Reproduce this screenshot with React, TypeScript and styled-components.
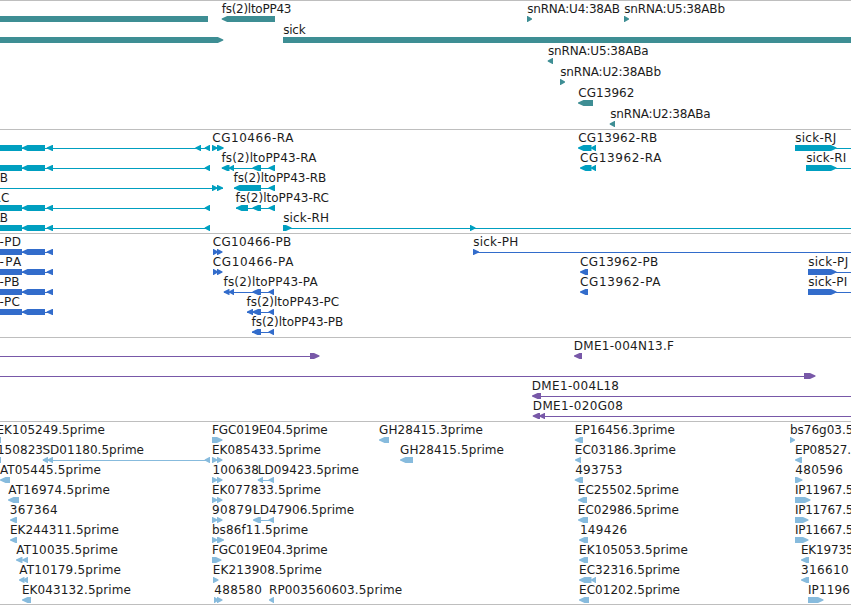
import React from 'react';
import styled, { createGlobalStyle } from 'styled-components';

type Dir = 'l' | 'r' | 'n';
/** text, left ink edge, right ink edge */
type Label = [string, number, number];
/** start, end, strand */
type Exon = [number, number, Dir];
/** start, end */
type Intron = [number, number];

interface LaneData {
  labels?: Label[];
  exons?: Exon[];
  introns?: Intron[];
}

interface TrackData {
  name: string;
  color: string;
  laneHeight: number;
  tail: number;
  lanes: LaneData[];
}

const WIDTH = 851;
const BAR_TOP = 13;
const BAR_HEIGHT = 6;
const HEAD = 5.5;

const GlobalStyle = createGlobalStyle`
  body {
    margin: 0;
    background: #ffffff;
    overflow: hidden;
  }
`;

const Viewer = styled.main`
  display: flex;
  flex-direction: column;
  width: ${WIDTH}px;
  height: 605px;
  overflow: hidden;
  box-sizing: border-box;
  border-bottom: 1px solid #bebebe;
  background: #ffffff;
`;

const TrackPanel = styled.section<{ $tail: number }>`
  display: flex;
  flex-direction: column;
  flex: none;
  border-top: 1px solid #bebebe;
  padding-top: 2px;
  padding-bottom: ${(p) => p.$tail}px;
`;

const LaneChart = styled.svg<{ $height: number; $color: string }>`
  display: block;
  width: ${WIDTH}px;
  height: ${(p) => p.$height}px;
  overflow: visible;
  fill: ${(p) => p.$color};
`;

const FeatureLabel = styled.text`
  font-family: 'DejaVu Sans', sans-serif;
  font-size: 12px;
  fill: #1c1c1c;
  white-space: pre;
`;

const leftGene: Exon[] = [[0, 22, 'n'], [22, 45, 'l'], [46.7, 53, 'l']];
const pair: Exon[] = [[212, 217.5, 'r'], [217, 222.5, 'r']];

const tracks: TrackData[] = [
  {
    name: 'Genes',
    color: '#3e8e94',
    laneHeight: 21,
    tail: 0,
    lanes: [
      {
        labels: [['fs(2)ltoPP43', 222.2, 290.7], ['snRNA:U4:38AB', 527.7, 619.3], ['snRNA:U5:38ABb', 624.7, 724.3]],
        exons: [[0, 208, 'n'], [221.7, 275, 'l'], [527, 532, 'r'], [624, 629, 'r']],
      },
      { labels: [['sick', 283.7, 305]], exons: [[0, 223.3, 'r'], [283, 851, 'n']] },
      { labels: [['snRNA:U5:38ABa', 548.5, 648]], exons: [[547.7, 553, 'l']] },
      { labels: [['snRNA:U2:38ABb', 560.7, 660.3]], exons: [[560, 565, 'r']] },
      { labels: [['CG13962', 578.9, 633.7]], exons: [[578, 593, 'l']] },
      { labels: [['snRNA:U2:38ABa', 610.7, 710]], exons: [[609.7, 615, 'l']] },
    ],
  },
  {
    name: 'Transcripts',
    color: '#009fc0',
    laneHeight: 20,
    tail: 1,
    lanes: [
      {
        labels: [['CG10466-RA', 212.9, 292.7], ['CG13962-RB', 578.9, 656.5], ['sick-RJ', 795.7, 835.5]],
        introns: [[22, 210], [212, 223], [836, 851]],
        exons: [...leftGene, [195.3, 201, 'l'], [204.7, 210, 'l'], [212, 217.5, 'r'], [217, 223.7, 'r'], [578, 591.5, 'l'], [591, 596, 'l'], [795, 836.5, 'r']],
      },
      {
        labels: [['fs(2)ltoPP43-RA', 222, 315.7], ['CG13962-RA', 580.7, 660.8], ['sick-RI', 806.7, 845.5]],
        introns: [[22, 210], [222, 275], [836, 851]],
        exons: [...leftGene, [204.7, 210, 'l'], [221.7, 229.5, 'l'], [229, 234, 'l'], [252.5, 261, 'l'], [268.5, 275, 'l'], [580, 591.5, 'l'], [591, 596, 'l'], [806, 836.5, 'r']],
      },
      {
        labels: [['B', 0.8, 6.3], ['fs(2)ltoPP43-RB', 234, 325.5]],
        introns: [[0, 223], [234, 275]],
        exons: [[212, 217.5, 'r'], [217, 223, 'r'], [234, 261, 'l'], [268.5, 275, 'l']],
      },
      {
        labels: [['RC', -6.3, 8.7], ['fs(2)ltoPP43-RC', 236, 328.3]],
        introns: [[22, 210], [236, 275]],
        exons: [...leftGene, [204.7, 210, 'l'], [236, 248, 'l'], [252.5, 261, 'l'], [268.5, 275, 'l']],
      },
      {
        labels: [['RB', -6.3, 7.2], ['sick-RH', 283.7, 328.3]],
        introns: [[22, 210], [283, 851]],
        exons: [...leftGene, [204.7, 210, 'l'], [283, 291.5, 'r'], [470, 475.5, 'r']],
      },
    ],
  },
  {
    name: 'Coding sequences',
    color: '#326ccb',
    laneHeight: 20,
    tail: 1,
    lanes: [
      {
        labels: [['-PD', 0, 20.3], ['CG10466-PB', 213.5, 290.5], ['sick-PH', 473.7, 517.5]],
        introns: [[22, 53], [473, 851]],
        exons: [...leftGene, [213, 218, 'r'], [217, 222.5, 'r'], [473, 479, 'r']],
      },
      {
        labels: [['-PA', 0, 20.5], ['CG10466-PA', 213.5, 292.7], ['CG13962-PB', 580.7, 657.5], ['sick-PJ', 808.7, 847.5]],
        introns: [[22, 53], [836, 851]],
        exons: [...leftGene, [213, 218, 'r'], [217, 222.5, 'r'], [580, 588, 'l'], [808, 836.5, 'r']],
      },
      {
        labels: [['-PB', 0, 18.7], ['fs(2)ltoPP43-PA', 224, 317], ['CG13962-PA', 580.7, 659.8], ['sick-PI', 808.7, 846.5]],
        introns: [[22, 53], [224, 274], [836, 851]],
        exons: [...leftGene, [223.7, 229.5, 'l'], [229, 234, 'l'], [252.5, 261, 'l'], [268.5, 274, 'l'], [580, 588, 'l'], [808, 836.5, 'r']],
      },
      {
        labels: [['-PC', 0, 19.3], ['fs(2)ltoPP43-PC', 247, 338.5]],
        introns: [[22, 53], [247, 274]],
        exons: [...leftGene, [247, 253, 'l'], [252.5, 261, 'l'], [268.5, 274, 'l']],
      },
      {
        labels: [['fs(2)ltoPP43-PB', 252, 342.5]],
        introns: [[252, 274]],
        exons: [[252, 261, 'l'], [268.5, 274, 'l']],
      },
    ],
  },
  {
    name: 'Clones',
    color: '#7858a8',
    laneHeight: 20,
    tail: 1,
    lanes: [
      {
        labels: [['DME1-004N13.F', 574.9, 673.3]],
        introns: [[0, 312]],
        exons: [[310, 319.5, 'r'], [574, 582, 'l']],
      },
      { introns: [[0, 806]], exons: [[804, 815.5, 'r']] },
      { labels: [['DME1-004L18', 532.9, 618.3]], introns: [[534, 851]], exons: [[532, 541, 'l']] },
      { labels: [['DME1-020G08', 533.9, 622.3]], introns: [[534, 851]], exons: [[532.7, 540, 'l'], [539, 545, 'l']] },
    ],
  },
  {
    name: 'ESTs',
    color: '#87bbdd',
    laneHeight: 20,
    tail: 0,
    lanes: [
      {
        labels: [['EK105249.5prime', -2.5, 104.3], ['FGC019E04.5prime', 213, 327], ['GH28415.3prime', 379.7, 482.3], ['EP16456.3prime', 575.9, 674.3], ['bs76g03.5', 791, 852.7]],
        exons: [[0, 1, 'n'], [212, 222.5, 'r'], [379, 389, 'l'], [574.7, 583, 'l'], [790, 795, 'r']],
      },
      {
        labels: [['150823', -2, 42.3], ['SD01180.5prime', 43.2, 143.3], ['EK085433.5prime', 213, 320.3], ['GH28415.5prime', 400.7, 503.3], ['EC03186.3prime', 575.9, 675.3], ['EP08527.', 796, 850.5]],
        introns: [[43, 210]],
        exons: [[0, 1, 'n'], [42.7, 48, 'l'], [47.5, 53, 'l'], [204.7, 210, 'l'], ...pair, [400, 413, 'l'], [575, 581, 'l'], [795, 802, 'l']],
      },
      {
        labels: [['AT05445.5prime', 0, 100.3], ['100638', 213.7, 258.3], ['LD09423.5prime', 258.9, 358.3], ['493753', 575.9, 621.7], ['480596', 796, 842.3]],
        introns: [[258, 274]],
        exons: [[0, 10, 'l'], ...pair, [257.7, 263, 'l'], [268.5, 274, 'l'], [574.7, 583, 'l'], [795, 802.5, 'r']],
      },
      {
        labels: [['AT16974.5prime', 8.3, 109.3], ['EK077833.5prime', 213, 320.3], ['EC25502.5prime', 578.9, 678.3], ['IP11967.5', 796, 852.7]],
        exons: [[8, 19, 'l'], ...pair, [578, 587, 'l'], [795, 810.5, 'r']],
      },
      {
        labels: [['367364', 10.9, 57], ['90879', 213, 251.5], ['LD47906.5prime', 254, 353.5], ['EC02986.5prime', 578.9, 678.3], ['IP11767.5', 796, 852.7]],
        introns: [[254, 274]],
        exons: [[10, 17, 'l'], ...pair, [253, 261, 'l'], [268.5, 274, 'l'], [578, 588, 'l'], [795, 808.5, 'r']],
      },
      {
        labels: [['EK244311.5prime', 11, 118.3], ['bs86f11.5prime', 213, 307.5], ['149426', 581, 626.5], ['IP11667.5', 796, 852.7]],
        exons: [[10, 17, 'l'], [212, 217.5, 'r'], [217, 224, 'r'], [579, 588, 'l'], [795, 808.5, 'r']],
      },
      {
        labels: [['AT10035.5prime', 16.3, 117.3], ['FGC019E04.3prime', 213, 327], ['EK105053.5prime', 580.2, 687.3], ['EK19735', 802, 853]],
        exons: [[16, 22.5, 'l'], [22, 28, 'l'], [212, 221.5, 'r'], [579, 588, 'l'], [801, 809, 'l']],
      },
      {
        labels: [['AT10179.5prime', 19.3, 120.3], ['EK213908.5prime', 213.9, 321.3], ['EC32316.5prime', 580.2, 679.3], ['316610', 802, 848]],
        exons: [[19, 24.5, 'l'], [23, 28, 'l'], [213, 218.5, 'r'], [579, 591.5, 'l'], [591, 596, 'l'], [801, 809, 'l']],
      },
      {
        labels: [['EK043132.5prime', 23, 130.3], ['488580', 215, 261.3], ['RP003560603.5prime', 270, 401.5], ['EC01202.5prime', 580.2, 679.3], ['IP1196', 809, 849.3]],
        exons: [[22, 31, 'l'], [214, 218.5, 'r'], [217, 222.5, 'r'], [269, 274, 'l'], [579, 589, 'l'], [808, 823.5, 'r']],
      },
    ],
  },
];

function exonPoints([x1, x2, dir]: Exon): string {
  const top = BAR_TOP;
  const bottom = BAR_TOP + BAR_HEIGHT;
  const tip = BAR_TOP + BAR_HEIGHT / 2;
  const nose = 0.6;
  const head = Math.min(HEAD, Math.max(x2 - x1 - 0.6, 0));
  if (dir === 'l') {
    return `${x1},${tip - nose} ${x1 + head},${top} ${x2},${top} ${x2},${bottom} ${x1 + head},${bottom} ${x1},${tip + nose}`;
  }
  if (dir === 'r') {
    return `${x1},${top} ${x2 - head},${top} ${x2},${tip - nose} ${x2},${tip + nose} ${x2 - head},${bottom} ${x1},${bottom}`;
  }
  return `${x1},${top} ${x2},${top} ${x2},${bottom} ${x1},${bottom}`;
}

/** Space between the pen position and the first glyph's ink. */
function bearing(text: string): number {
  const first = text[0];
  if ('A'.includes(first)) return 0.1;
  if ('fs-'.includes(first)) return 0.5;
  if ('CGS4'.includes(first)) return 0.7;
  return 1.1;
}

function Lane({ data, height, color }: { data: LaneData; height: number; color: string }) {
  return (
    <LaneChart $height={height} $color={color}>
      {data.introns?.map(([a, b]) => (
        <rect key={`i${a}`} x={a} y={BAR_TOP + 3} width={b - a} height={1} />
      ))}
      {data.exons?.map((e) => (
        <polygon key={`e${e[0]}`} points={exonPoints(e)} />
      ))}
      {data.labels?.map(([text, left, right]) => {
        const x = left - bearing(text);
        return (
          <FeatureLabel key={text} x={x} y={10} textLength={right + 0.7 - x} lengthAdjust="spacing">
            {text}
          </FeatureLabel>
        );
      })}
    </LaneChart>
  );
}

export default function App() {
  return (
    <>
      <GlobalStyle />
      <Viewer>
        {tracks.map((track) => (
          <TrackPanel key={track.name} $tail={track.tail}>
            {track.lanes.map((lane, i) => (
              <Lane key={i} data={lane} height={track.laneHeight} color={track.color} />
            ))}
          </TrackPanel>
        ))}
      </Viewer>
    </>
  );
}
